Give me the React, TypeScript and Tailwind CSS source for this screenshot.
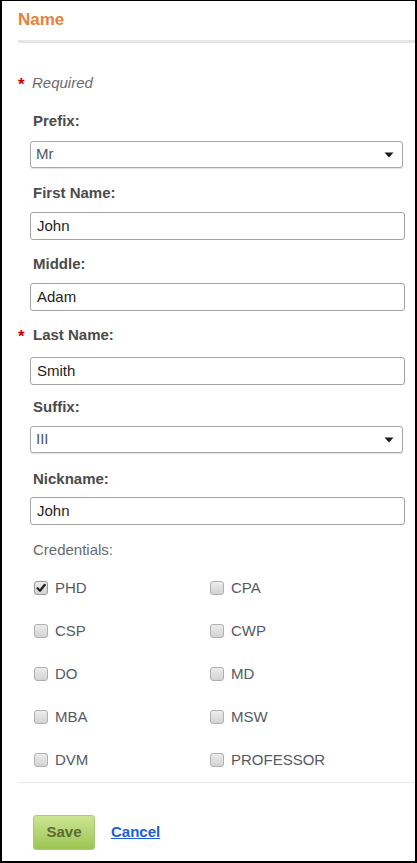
import React from "react";

const font = { fontFamily: '"Liberation Sans", Arial, sans-serif' };

function Label({ text, required, mt }: { text: string; required?: boolean; mt: string }) {
  return (
    <div className={`flex items-center h-5 leading-5 ${mt}`}>
      <span className="w-[15px] text-[#cc0000] text-[17px] font-bold leading-5 pt-[3px]">{required ? "*" : ""}</span>
      <span className="text-[15px] font-bold text-[#4b4b4b]">{text}</span>
    </div>
  );
}

function TextBox({ value, mt }: { value: string; mt: string }) {
  return (
    <div className={`ml-[12px] mr-[10px] h-[28px] rounded-[3px] border border-[#a3a3a3] bg-white flex items-center pl-[6px] text-[15px] text-[#1e1e1e] ${mt}`}>
      {value}
    </div>
  );
}

function SelectBox({ value, mt }: { value: string; mt: string }) {
  return (
    <div className={`ml-[12px] mr-[12px] h-[27px] rounded-[3px] border border-[#a8a8a8] bg-white flex items-center justify-between pl-[5px] pr-[8px] text-[15px] text-[#4d5566] shadow-[0_1px_1px_rgba(0,0,0,0.12)] ${mt}`}>
      <span>{value}</span>
      <svg width="10" height="6" viewBox="0 0 10 6">
        <path d="M0.5 0.5 L9.5 0.5 L5 5.5 Z" fill="#1a1a1a" />
      </svg>
    </div>
  );
}

function Check({ label, checked }: { label: string; checked?: boolean }) {
  return (
    <div className="flex items-center h-5">
      <div
        className={`relative w-[14px] h-[14px] rounded-[3px] border ${
          checked ? "border-[#999999]" : "border-[#b0b0b0]"
        } bg-gradient-to-b from-[#ececec] to-[#d3d3d3]`}
      >
        {checked && (
          <svg className="absolute left-[1px] top-[1px]" width="10" height="10" viewBox="0 0 10 10">
            <path d="M1.5 5.2 L4 7.8 L8.8 1.8" fill="none" stroke="#222" strokeWidth="2.2" strokeLinecap="round" strokeLinejoin="round" />
          </svg>
        )}
      </div>
      <span className="ml-[7px] text-[15px] text-[#555a62]">{label}</span>
    </div>
  );
}

export default function App() {
  const creds: [string, boolean][] = [
    ["PHD", true],
    ["CPA", false],
    ["CSP", false],
    ["CWP", false],
    ["DO", false],
    ["MD", false],
    ["MBA", false],
    ["MSW", false],
    ["DVM", false],
    ["PROFESSOR", false],
  ];
  return (
    <div style={font} className="w-[417px] h-[863px] bg-white border-t border-l-2 border-r-2 border-b-2 border-black overflow-hidden">
      <div className="pt-[9px] pl-[16px]">
        <div className="h-5 leading-5 text-[17px] font-bold text-[#e8803a]">Name</div>
        <div className="mt-[10px] h-[3px] bg-[#e6e6e6]" />

        <div className="mt-[30px] flex items-center h-5 leading-5">
          <span className="w-[14px] text-[#cc0000] text-[17px] font-bold pt-[3px]">*</span>
          <span className="text-[15px] italic text-[#6b6b6b]">Required</span>
        </div>

        <Label text="Prefix:" mt="mt-[18px]" />
        <SelectBox value="Mr" mt="mt-[10px]" />

        <Label text="First Name:" mt="mt-[15px]" />
        <TextBox value="John" mt="mt-[9px]" />

        <Label text="Middle:" mt="mt-[14px]" />
        <TextBox value="Adam" mt="mt-[9px]" />

        <Label text="Last Name:" required mt="mt-[14px]" />
        <TextBox value="Smith" mt="mt-[12px]" />

        <Label text="Suffix:" mt="mt-[12px]" />
        <SelectBox value="III" mt="mt-[9px]" />

        <Label text="Nickname:" mt="mt-[16px]" />
        <TextBox value="John" mt="mt-[8px]" />

        <div className="mt-[15px] h-5 leading-5 pl-[15px] text-[15px] text-[#666a70]">Credentials:</div>

        <div className="mt-[18px] pl-[16px] grid grid-cols-[176px_1fr] gap-y-[23px]">
          {creds.map(([l, c]) => (
            <Check key={l} label={l} checked={c} />
          ))}
        </div>

        <div className="mt-[12px] h-px bg-[#e8e8e8]" />

        <div className="mt-[32px] pl-[15px] flex items-center">
          <button className="w-[62px] h-[35px] rounded-[3px] border border-[#a9c977] bg-gradient-to-b from-[#cce592] to-[#9cc552] text-[15px] font-bold text-[#5a6b33]">
            Save
          </button>
          <a href="#" className="ml-[16px] text-[15px] font-bold text-[#1a5fd8] underline">
            Cancel
          </a>
        </div>
      </div>
    </div>
  );
}
